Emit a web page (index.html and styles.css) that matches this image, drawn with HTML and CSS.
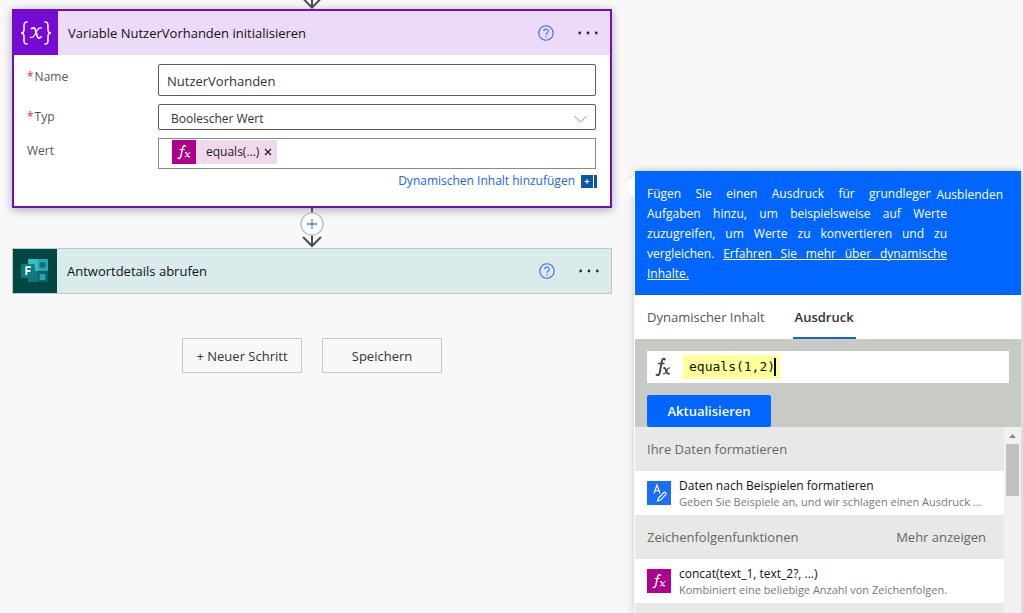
FILE: index.html
```html
<!DOCTYPE html>
<html lang="de">
<head>
<meta charset="utf-8">
<title>Flow bearbeiten</title>
<link rel="stylesheet" href="styles.css">
</head>
<body>
<div class="designer">
  <main class="canvas">
    <svg class="arrow-in" width="24" height="9" viewBox="0 0 24 9" fill="none" stroke="#4c4c4c" stroke-width="2"><path d="M12 0v7M3-1.5l9 9 9-9"/></svg>
    <section class="card card-variable">
      <header class="card-head">
        <span class="card-icon icon-variable">
          <svg width="34" height="26" viewBox="0 0 34 26" fill="none" stroke="#fff" stroke-linecap="round"><path stroke-width="1.500" d="M8 2C5 2 5 3.500 5 5.500v4C5 11.500 4 13 2 13c2 0 3 1.500 3 3.500v4C5 22.500 5 24 8 24M26 2c3 0 3 1.500 3 3.500v4c0 2 1 3.500 3 3.500-2 0-3 1.500-3 3.500v4c0 2 0 3.500-3 3.500"/><path stroke-width="1.700" d="M12.500 8.500c2-1.200 3.300-.9 4 1.500l1.800 6.500c.6 2 2.200 2 3.700.4"/><path stroke-width="1.100" d="M22.500 8c-2.300-.7-3.800.8-5.300 4s-3.500 6.500-5.900 5.200"/></svg>
        </span>
        <h2 class="card-title">Variable NutzerVorhanden initialisieren</h2>
        <button class="icon-button" aria-label="Hilfe"><svg width="16" height="16" viewBox="0 0 16 16" fill="none" stroke="#3b6be0" stroke-width="1.100"><circle cx="8" cy="8" r="7.200"/><path d="M5.800 6.300c0-3 4.500-2.900 4.500-.2C10.300 7.800 8 8 8 10M8 11.200v1.300"/></svg></button>
        <button class="icon-button more" aria-label="Mehr"><svg width="20" height="4" viewBox="0 0 20 4" fill="#2b2433"><circle cx="1.700" cy="2" r="1.400"/><circle cx="10" cy="2" r="1.400"/><circle cx="18.300" cy="2" r="1.400"/></svg></button>
      </header>
      <div class="fields">
        <label for="name"><i>*</i>Name</label>
        <input id="name" class="box name-box" value="NutzerVorhanden">
        <label for="type"><i>*</i>Typ</label>
        <div class="select-wrap">
          <select id="type" class="box type-box"><option>Boolescher Wert</option></select>
          <svg class="chevron" width="13" height="8" viewBox="0 0 13 8" fill="none" stroke="#8a8a8a"><path d="M.5 1l6 6 6-6"/></svg>
        </div>
        <span class="label">Wert</span>
        <div class="box value-box">
          <span class="token"><span class="fx-tile">
            <svg width="16" height="16" viewBox="0 0 16 16" fill="none" stroke="#fff" stroke-linecap="round"><path stroke-width="1.500" d="M9.500 2.200C8.200 1 7 1.800 6.600 4L5 11.500C4.500 14 3.500 15 2 14.200"/><path d="M4 5.500h4.500"/><path stroke-width="1.400" d="M9.500 8.700c2-.7 1.800 5 4 4"/><path d="M14 8.700c-1.800-.6-2.800 5-5 4"/></svg>
          </span><span class="token-text">equals(...)</span><button class="token-x" aria-label="Entfernen"><svg width="8" height="8" viewBox="0 0 8 8" stroke="#222" stroke-width="1.200"><path d="M1 1l6 6M7 1L1 7"/></svg></button></span>
        </div>
      </div>
      <div class="dynamic">
        <a href="#">Dynamischen Inhalt hinzufügen</a>
        <svg width="16" height="13" viewBox="0 0 16 13"><path fill="#0b57a4" d="M0 0h12v13H0zM13 0h3v13h-3z"/><path d="M3.500 6.500h5M6 4v5" stroke="#fff"/></svg>
      </div>
    </section>
    <div class="connector">
      <svg width="26" height="40" viewBox="0 0 26 40" fill="none"><path d="M13 0v38M4 29l9 9 9-9" stroke="#4c4c4c" stroke-width="2"/><circle cx="13" cy="16" r="11" fill="#fff" stroke="#c4c4c4" stroke-width="1.500"/><path d="M8 16h10M13 11v10" stroke="#4a86c8" stroke-width="1.300"/></svg>
    </div>
    <section class="card card-forms">
      <header class="card-head">
        <span class="card-icon icon-forms">
          <svg width="28" height="26" viewBox="0 0 28 26"><path fill="#35bcc4" d="M7 1h11v12H7z"/><path fill="#2aa5ad" d="M17 1h10v12H17z"/><path fill="#13747a" d="M7 13h10v11H7z"/><path fill="#0c5f65" d="M17 13h10v11H17z"/><circle cx="21.500" cy="7" r="3" fill="#0d7076"/><path fill="#27a4ab" d="M18.500 16h6v6h-6z"/><rect y="6" width="14" height="14" rx="1.500" fill="#0e7c84"/><path d="M5.300 17V9.200h4.700M5.300 13h4" fill="none" stroke="#fff" stroke-width="1.800"/></svg>
        </span>
        <h2 class="card-title">Antwortdetails abrufen</h2>
        <button class="icon-button" aria-label="Hilfe"><svg width="16" height="16" viewBox="0 0 16 16" fill="none" stroke="#3b6be0" stroke-width="1.100"><circle cx="8" cy="8" r="7.200"/><path d="M5.800 6.300c0-3 4.500-2.900 4.500-.2C10.300 7.800 8 8 8 10M8 11.200v1.300"/></svg></button>
        <button class="icon-button more" aria-label="Mehr"><svg width="20" height="4" viewBox="0 0 20 4" fill="#2b2b2b"><circle cx="1.700" cy="2" r="1.400"/><circle cx="10" cy="2" r="1.400"/><circle cx="18.300" cy="2" r="1.400"/></svg></button>
      </header>
    </section>
    <div class="actions">
      <button class="action">+ Neuer Schritt</button>
      <button class="action">Speichern</button>
    </div>
  </main>
  <aside class="panel">
    <svg class="pointer" width="12" height="26" viewBox="0 0 12 26"><path fill="#fff" d="M12 1v24L0 13z"/></svg>
    <div class="intro">
      <p>Fügen Sie einen Ausdruck für grundlegende Aufgaben hinzu, um beispielsweise auf Werte zuzugreifen, um Werte zu konvertieren und zu vergleichen. <a href="#">Erfahren Sie mehr über dynamische Inhalte.</a></p>
      <button class="hide">Ausblenden</button>
    </div>
    <nav class="tabs">
      <button class="tab">Dynamischer Inhalt</button>
      <button class="tab active">Ausdruck</button>
    </nav>
    <div class="editor">
      <div class="expression">
        <svg width="16" height="20" viewBox="0 0 16 20" fill="none" stroke="#444" stroke-linecap="round"><path stroke-width="1.900" d="M10 2.500C8.500 1 7.200 2 6.700 5L5 14.500C4.500 17.500 3.300 19 1.500 17.800"/><path stroke-width="1.300" d="M3.500 6.500h5.500"/><path stroke-width="1.800" d="M9 11c2.300-.9 2 6.800 5 5.700"/><path stroke-width="1.200" d="M14.500 11c-2.300-.9-3.300 6.800-6 5.700"/></svg>
        <div class="highlight"><input aria-label="Ausdruck" value="equals(1,2)"><span class="caret"></span></div>
      </div>
      <button class="update">Aktualisieren</button>
    </div>
    <div class="results">
      <div class="list">
        <h3 class="group">Ihre Daten formatieren</h3>
        <div class="item">
          <span class="tile tile-format"><svg width="20" height="20" viewBox="0 0 20 20" fill="none" stroke="#fff" stroke-width="1.100"><path d="M5 10.500l3-8.500 3 8.500M6 7.800h4M8.500 18l1-3 5.500-5.500c1-1 2.800.7 1.800 1.800l-5.300 5.700z"/></svg></span>
          <div class="item-text"><b>Daten nach Beispielen formatieren</b><span>Geben Sie Beispiele an, und wir schlagen einen Ausdruck ...</span></div>
        </div>
        <h3 class="group">Zeichenfolgenfunktionen <button class="show-more">Mehr anzeigen</button></h3>
        <div class="item">
          <span class="tile tile-fx"><svg width="16" height="16" viewBox="0 0 16 16" fill="none" stroke="#fff" stroke-linecap="round"><path stroke-width="1.500" d="M9.500 2.200C8.200 1 7 1.800 6.600 4L5 11.500C4.500 14 3.500 15 2 14.200"/><path d="M4 5.500h4.500"/><path stroke-width="1.400" d="M9.500 8.700c2-.7 1.800 5 4 4"/><path d="M14 8.700c-1.800-.6-2.800 5-5 4"/></svg></span>
          <div class="item-text"><b>concat(text_1, text_2?, ...)</b><span>Kombiniert eine beliebige Anzahl von Zeichenfolgen.</span></div>
        </div>
        <div class="group"></div>
      </div>
      <div class="scrollbar"><svg width="7" height="4" viewBox="0 0 7 4"><path fill="#8c8c8c" d="M0 4l3.500-4L7 4z"/></svg><span class="thumb"></span></div>
    </div>
  </aside>
</div>
</body>
</html>
```

FILE: styles.css
```css
* { box-sizing: border-box; }
body {
  margin: 0;
  background: #f8f8f8;
  color: #333;
  font: 13px/20px "Open Sans", "Noto Sans", sans-serif;
  overflow: hidden;
}
button, input, select { font: inherit; color: inherit; }
button { border: 0; padding: 0; background: none; white-space: nowrap; }
svg { display: block; flex: none; }
h2, h3, p { margin: 0; font-size: inherit; font-weight: 400; }

.designer {
  display: grid;
  grid-template-columns: minmax(0, 1fr) 386px;
  padding-right: 2px;
  height: 100vh;
}
.canvas { padding: 0 23px 0 12px; }
.arrow-in { margin: 0 auto; }

.card-variable {
  border: 2px solid #6f0fbf;
  background: #fff;
  box-shadow: 0 2px 9px rgba(0, 0, 0, .3);
  padding-bottom: 15px;
}
.card-head { display: flex; align-items: center; height: 44px; padding-right: 12px; }
.card-variable .card-head { background: #ebdbf9; }
.card-forms { border: 1px solid #b5cdca; background: #d9ebeb; }
.card-icon { display: grid; place-items: center; align-self: stretch; width: 44px; }
.icon-variable { background: #770bd6; }
.icon-forms { background: #034745; }
.card-title { flex: 1; padding-left: 10px; color: #111; }
.icon-button { display: grid; place-items: center; width: 16px; height: 24px; }
.icon-button.more { width: 20px; margin-left: 24px; }

.fields {
  display: grid;
  grid-template-columns: 131px 1fr;
  row-gap: 8px;
  padding: 9px 14px 0 13px;
}
.fields label, .label { padding-top: 3px; font-size: 12px; color: #555; }
.fields i { margin-right: 1px; color: #d13438; font-style: normal; }
.box { width: 100%; border: 1px solid #595959; border-radius: 2px; background: #fff; color: #333; }
.name-box { height: 32px; padding: 2px 8px 0; }
.select-wrap { position: relative; }
.type-box { display: block; height: 26px; padding: 3px 12px 0; font-size: 12px; appearance: none; }
.chevron { position: absolute; right: 9px; top: 11px; }
.value-box { height: 31px; padding: 1px 13px; border-color: #8a8a8a; border-radius: 0; }
.token { display: inline-flex; align-items: center; height: 24px; background: #f1d9ec; color: #222; font-size: 12px; vertical-align: top; }
.fx-tile { display: grid; place-items: center; width: 24px; height: 24px; background: #ad008c; }
.token-text { padding-left: 10px; }
.token-x { padding: 0 5px; }
.dynamic { display: flex; justify-content: flex-end; align-items: center; gap: 6px; padding: 2px 13px 0; font-size: 12px; }
.dynamic a { color: #2266e3; text-decoration: none; }

.connector { display: grid; place-items: center; }
.actions { display: flex; justify-content: center; gap: 20px; padding-top: 44px; }
.action { width: 120px; height: 35px; border: 1px solid #c8c8c8; }

.panel {
  position: relative;
  display: flex;
  flex-direction: column;
  margin-top: 171px;
  min-height: 0;
  background: #fff;
  box-shadow: -1px 0 0 #fff, 0 0 8px rgba(0, 0, 0, .25);
}
.pointer { position: absolute; left: -12px; top: 3px; }
.intro { position: relative; padding: 13px 74px 11px 12px; background: #0066ff; color: #fff; font-size: 12px; }
.intro p { text-align: justify; }
.intro a { color: inherit; }
.hide { position: absolute; top: 14px; right: 12px; padding: 0 6px 0 5px; background: #0066ff; }
.tabs { display: flex; gap: 28px; height: 44px; padding: 0 12px; }
.tab { height: 44px; padding-top: 2px; color: #555; border-bottom: 2px solid transparent; }
.tab.active { padding: 2px 2px 0; color: #333; font-weight: 600; border-color: #1266d1; }
.editor { padding: 12px 12px 0; background: #c8cac6; }
.expression { display: flex; align-items: center; height: 32px; padding-left: 8px; background: #fff; }
.highlight { display: flex; align-items: center; height: 24px; margin-left: 12px; padding: 0 4px 0 6px; background: #ffff99; }
.highlight input { width: 11ch; padding: 0; border: 0; background: none; color: #111; font-family: "DejaVu Sans Mono", monospace; }
.caret { width: 2px; height: 18px; margin-left: -1px; background: #000; }
.update { width: 124px; height: 32px; margin-top: 12px; border-radius: 2px; background: #0066ff; color: #fff; font-weight: 600; vertical-align: top; }
.results { display: flex; flex: 1; min-height: 0; }
.list { flex: 1; min-width: 0; overflow: hidden; }
.group { display: flex; justify-content: space-between; align-items: center; height: 44px; padding: 0 18px 0 12px; background: #e7e9e6; color: #666; }
.item { display: flex; align-items: center; gap: 8px; height: 44px; padding: 0 12px; background: #fff; }
.tile { display: grid; place-items: center; flex: none; width: 24px; height: 24px; }
.tile-format { background: #1a6ff5; }
.tile-fx { background: #ad008c; }
.item-text { min-width: 0; padding-top: 1px; font-size: 12px; line-height: 16px; color: #777; white-space: nowrap; }
.item-text b, .item-text span { display: block; }
.item-text b { color: #111; font-weight: 400; }
.item-text span { font-size: 11px; }
.scrollbar { display: flex; flex-direction: column; align-items: center; width: 17px; padding-top: 7px; background: #f1f1f1; }
.thumb { width: 13px; height: 52px; margin-top: 6px; background: #c1c1c1; }
```
